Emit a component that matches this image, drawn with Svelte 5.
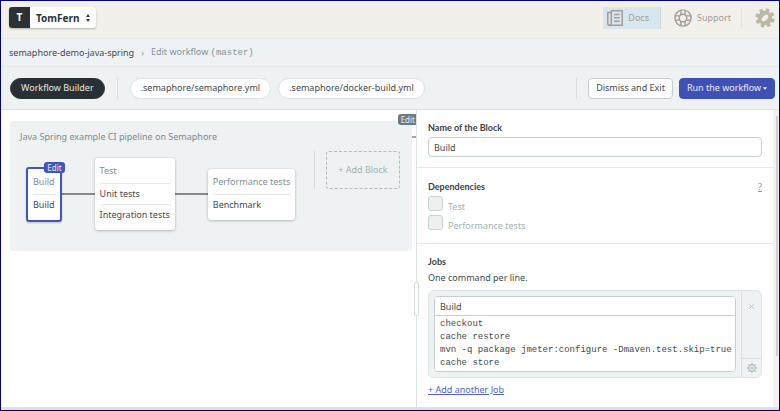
<script>
  let blockName = $state('Build');
  let jobName = $state('Build');
  let commands = $state(
    'checkout\ncache restore\nmvn -q package jmeter:configure -Dmaven.test.skip=true\ncache store'
  );
  const files = ['.semaphore/semaphore.yml', '.semaphore/docker-build.yml'];
  const blocks = [
    { name: 'Build', jobs: ['Build'], selected: true },
    { name: 'Test', jobs: ['Unit tests', 'Integration tests'] },
    { name: 'Performance tests', jobs: ['Benchmark'] }
  ];
  const dependencies = ['Test', 'Performance tests'];
  const teeth = [0, 45, 90, 135, 180, 225, 270, 315];
</script>

<div class="frame">
  <header class="topbar">
    <button class="org">
      <span class="initial">T</span>
      <span class="org-name">TomFern</span>
      <svg class="sort" width="6" height="10" viewBox="0 0 6 10" aria-hidden="true">
        <path d="M3 1 4.9 4H1.1ZM3 9 1.1 6H4.9Z" fill="#2b3236" />
      </svg>
    </button>
    <nav class="help">
      <a class="docs" href="#docs">
        <svg width="16" height="16" viewBox="0 0 16 16" fill="none" stroke="#a39b98" stroke-width="1.5" aria-hidden="true">
          <path d="M4.3 13.2V0.8H15.2V15.2H2.6A1.8 1.8 0 0 1 0.8 13.4V2.6H4.3M4.3 13.2A1.8 1.8 0 0 1 2.6 15.2M7 4.5H12.6M7 7.8H12.6M7 11.2H12.6" />
        </svg>
        Docs
      </a>
      <a class="support" href="#support">
        <svg width="18" height="18" viewBox="0 0 18 18" fill="none" stroke="#a39b98" stroke-width="1.4" aria-hidden="true">
          <circle cx="9" cy="9" r="8.1" />
          <circle cx="9" cy="9" r="3.8" />
          <path d="M6.9 1.3V5.9M11.1 1.3V5.9M6.9 12.1V16.7M11.1 12.1V16.7M1.3 6.9H5.9M1.3 11.1H5.9M12.1 6.9H16.7M12.1 11.1H16.7" />
        </svg>
        Support
      </a>
      <a class="settings" href="#settings" aria-label="Settings">
        <svg width="20" height="20" viewBox="-10 -10 20 20" aria-hidden="true">
          <g fill="#bdb7a5">
            {#each teeth as angle}
              <path d="M-2 -6-1.8 -9.6H1.8L2 -6Z" transform="rotate({angle + 18})" />
            {/each}
            <circle r="7" />
          </g>
          <ellipse rx="4" ry="2.3" fill="#f2f0eb" transform="rotate(-45)" />
        </svg>
      </a>
    </nav>
  </header>

  <nav class="crumbs">
    <a href="#project">semaphore-demo-java-spring</a>
    <span class="sep">›</span>
    <span class="current">Edit workflow <code>(master)</code></span>
  </nav>

  <div class="toolbar">
    <button class="pill dark">Workflow Builder</button>
    <div class="files">
      {#each files as file}
        <button class="pill">{file}</button>
      {/each}
    </div>
    <div class="actions">
      <button class="action">Dismiss and Exit</button>
      <button class="action primary">
        Run the workflow
        <svg width="4" height="3" viewBox="0 0 4 3" aria-hidden="true"><path d="M0 0.3H4L2 2.7Z" fill="#fff" /></svg>
      </button>
    </div>
  </div>

  <main>
    <div class="canvas">
      <button class="tag next">Edit</button>
      <span class="stub"></span>
      <section class="pipeline">
        <h2>Java Spring example CI pipeline on Semaphore</h2>
        <div class="flow">
          {#each blocks as block, i}
            {#if i > 0}<span class="link"></span>{/if}
            <div class="block" class:selected={block.selected}>
              {#if block.selected}<button class="tag">Edit</button>{/if}
              <h3>{block.name}</h3>
              {#each block.jobs as job}
                <p>{job}</p>
              {/each}
            </div>
          {/each}
          <div class="add">
            <button>+ Add Block</button>
          </div>
        </div>
      </section>
    </div>

    <aside>
      <span class="handle"></span>
      <section class="name">
        <label class="title" for="block-name">Name of the Block</label>
        <input id="block-name" type="text" bind:value={blockName} />
      </section>

      <section class="deps">
        <div class="row">
          <h4 class="title">Dependencies</h4>
          <a class="hint" href="#dependencies">?</a>
        </div>
        {#each dependencies as dependency}
          <label class="check"><input type="checkbox" disabled /><span>{dependency}</span></label>
        {/each}
      </section>

      <section class="jobs">
        <h4 class="title">Jobs</h4>
        <p>One command per line.</p>
        <div class="job">
          <div class="editor">
            <input type="text" aria-label="Job name" bind:value={jobName} />
            <textarea rows="4" aria-label="Commands" spellcheck="false" bind:value={commands}></textarea>
          </div>
          <div class="tools">
            <button class="remove" aria-label="Remove job">
              <svg width="5" height="5" viewBox="0 0 5 5" aria-hidden="true"><path d="M0.4 0.4 4.6 4.6M4.6 0.4 0.4 4.6" stroke="#b4c0c1" /></svg>
            </button>
            <button class="options" aria-label="Job settings">
              <svg width="10" height="10" viewBox="-5 -5 10 10" fill="none" stroke="#b0bcbd" aria-hidden="true">
                <circle r="3.3" />
                <circle r="1.2" />
                {#each teeth as angle}
                  <path d="M0 -3.3V-4.8" stroke-width="1.4" transform="rotate({angle})" />
                {/each}
              </svg>
            </button>
          </div>
        </div>
        <a class="another" href="#add-job">+ Add another Job</a>
      </section>
    </aside>
    <div class="scroll"><span></span></div>
  </main>
  <div class="bottom"></div>
</div>

<style>
  * { box-sizing: border-box; }
  h2, h3, h4, p { margin: 0; font-size: 9px; font-weight: 400; }
  button, input, textarea { margin: 0; font: inherit; color: inherit; }
  button { cursor: pointer; white-space: nowrap; }
  a { color: inherit; text-decoration: none; }
  svg { display: block; flex: none; }

  .frame {
    display: flex;
    flex-direction: column;
    min-height: 100vh;
    border: 1px solid #000080;
    background: #fff;
    color: #43494d;
    font: 9px/12px "Noto Sans", sans-serif;
  }

  .topbar {
    display: flex;
    align-items: center;
    justify-content: space-between;
    height: 38px;
    padding: 0 4px 4px 8px;
    background: #f2f0eb;
    border-bottom: 1px solid #e6e9e7;
  }
  .org {
    display: flex;
    align-items: center;
    height: 21px;
    padding: 0 5px 0 0;
    border: 0;
    border-radius: 3px;
    background: #fff;
    box-shadow: 0 1px 2px #0004;
    font-size: 10px;
    font-weight: 700;
    color: #2b3236;
  }
  .initial {
    width: 21px;
    line-height: 21px;
    border-radius: 3px 0 0 3px;
    background: #2b3236;
    color: #fff;
  }
  .org-name { padding: 0 5px 0 6px; }
  .help { display: flex; align-items: center; color: #a39b98; }
  .docs, .support { display: flex; align-items: center; gap: 5px; height: 22px; }
  .docs { padding: 0 11px 0 4px; background: #d8e7ee; border-right: 1px solid #c9d9df; }
  .support { padding: 0 10px 0 13px; border-right: 1px solid #e6e4de; }
  .settings { padding-left: 13px; }

  .crumbs {
    display: flex;
    align-items: center;
    gap: 7px;
    height: 28px;
    padding: 0 8px;
    background: #eef2f4;
    border-bottom: 1px solid #e4e9eb;
  }
  .sep, .current { color: #839298; }
  code { font: 9px/12px "Liberation Mono", monospace; }

  .toolbar {
    display: flex;
    align-items: center;
    height: 43px;
    padding: 0 4px 0 9px;
    background: #eef2f3;
    border-bottom: 1px solid #dde4e5;
  }
  .pill {
    height: 21px;
    padding: 0 10px;
    border: 1px solid #dde3e4;
    border-radius: 11px;
    background: #fff;
  }
  .pill.dark { background: #283033; border-color: #283033; color: #e3e8e8; }
  .files { display: flex; gap: 7px; margin-left: 12px; padding-left: 12px; border-left: 1px solid #dbe1e2; }
  .actions { display: flex; gap: 6px; margin-left: auto; padding-left: 11px; border-left: 1px solid #dbe1e2; }
  .action {
    display: flex;
    align-items: center;
    gap: 2px;
    height: 21px;
    padding: 0 7px;
    border: 1px solid #c5cfd1;
    border-radius: 4px;
    background: #fff;
  }
  .primary { background: #3f51b5; border-color: #3f51b5; color: #e9ecfa; }

  main { display: grid; grid-template-columns: minmax(0, 415fr) minmax(0, 357fr) 6px; flex: 1; }
  .canvas { position: relative; overflow: hidden; padding: 11px 4px 11px 9px; }
  .pipeline { height: 130px; padding: 10px; border-radius: 3px; background: #eef2f3; }
  h2 { color: #7c8b8c; white-space: nowrap; }
  .flow { display: flex; align-items: center; height: 86px; margin-top: 8px; padding-left: 6px; }
  .block {
    position: relative;
    flex: none;
    padding: 0 5px 5px;
    border-radius: 3px;
    background: #fff;
    box-shadow: 0 0 2px #0002, 0 1px 3px #0003;
  }
  .block.selected { border: 2px solid #4355b9; box-shadow: 0 1px 2px #0003; }
  h3 { padding: 7px 0 6px; color: #829090; line-height: 12px; }
  .block p { border-top: 1px solid #e5e8e8; line-height: 20px; }
  .link { width: 33px; height: 2px; background: #8a8788; flex: none; }
  .tag {
    position: absolute;
    top: -7px;
    right: -5px;
    height: 11px;
    padding: 0 3px;
    border: 0;
    border-radius: 3px;
    background: #4355b9;
    color: #e9ecfa;
    font-size: 8px;
    line-height: 11px;
  }
  .tag.next { top: 4px; right: -2px; background: #6c7b82; }
  .stub { position: absolute; top: 26px; right: 0; width: 4px; height: 2px; background: #a3a3a3; }
  .add { align-self: flex-start; height: 38px; margin-left: 19px; padding-left: 11px; border-left: 1px solid #d3dada; }
  .add button {
    height: 38px;
    padding: 0 11px;
    border: 1px dashed #b0baba;
    border-radius: 3px;
    background: none;
    color: #a5b1ae;
  }

  aside { position: relative; border-left: 1px solid #dde4e5; }
  aside section { padding: 0 11px; border-bottom: 1px solid #e3e8e8; }
  .handle {
    position: absolute;
    top: 172px;
    left: -3px;
    width: 5px;
    height: 34px;
    border: 1px solid #d5dcdc;
    border-radius: 2px;
    background: #fff;
  }
  .title { display: block; font: 700 9px/12px Lato, sans-serif; color: #3a4145; }
  aside section.name { height: 58px; padding-top: 12px; }
  .name input {
    width: 100%;
    height: 20px;
    margin-top: 3px;
    padding: 0 5px;
    border: 1px solid #c8d1d1;
    border-radius: 4px;
  }
  aside section.deps { height: 76px; padding-top: 13px; }
  .row { display: flex; justify-content: space-between; }
  .hint { color: #7d9a9c; text-decoration: underline; }
  .check { display: flex; align-items: flex-start; gap: 5px; height: 18px; margin-top: 1px; color: #a5b1b1; }
  .row + .check { margin-top: 3px; }
  .check span { padding-top: 5px; }
  .check input {
    appearance: none;
    width: 15px;
    height: 15px;
    margin: 0;
    border: 1px solid #cad2d2;
    border-radius: 3px;
    background: #eef0f0;
  }
  aside section.jobs { padding-top: 12px; border: 0; }
  .jobs p { margin-top: 4px; }
  .job {
    display: flex;
    margin: 6px 0;
    border: 1px solid #dde5e6;
    border-radius: 6px;
    background: #eef2f3;
  }
  .editor {
    flex: 1;
    min-width: 0;
    margin: 5px;
    border: 1px solid #c5cfd1;
    border-radius: 4px;
    background: #fff;
    overflow: hidden;
  }
  .editor input {
    display: block;
    width: 100%;
    height: 19px;
    padding: 0 5px;
    border: 0;
    border-bottom: 1px solid #c5cfd1;
  }
  .editor textarea {
    display: block;
    width: 100%;
    height: 55px;
    padding: 2px 0 0 5px;
    border: 0;
    resize: none;
    overflow: hidden;
    font: 9px/13px "Liberation Mono", monospace;
  }
  .tools { display: flex; flex-direction: column; width: 20px; border-left: 1px solid #d8e0e1; }
  .tools button { display: flex; justify-content: center; padding: 0; border: 0; background: none; }
  .remove { flex: 1; align-items: flex-start; }
  .remove svg { margin-top: 13px; }
  .tools .options { height: 19px; align-items: center; border-top: 1px solid #d8e0e1; }
  .another { color: #5163bd; text-decoration: underline; }
  .scroll { background: #f1f1f1; padding: 6px 1px 0 3px; }
  .scroll span { display: block; height: 240px; background: #cfcfcf; }
  .bottom { height: 3px; background: #dfe0e1; }
</style>
